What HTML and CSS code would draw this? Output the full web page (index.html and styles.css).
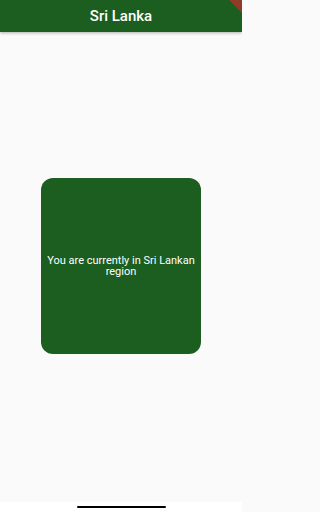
FILE: index.html
```html
<!DOCTYPE html>
<html>
<head>
<meta charset="utf-8">
<link rel="stylesheet" href="styles.css">
</head>
<body>
<div class="screen">
  <header class="appbar">
    <h1 class="title">Sri Lanka</h1>
    <div class="debug-banner"></div>
  </header>
  <main class="content">
    <div class="card">
      <p class="card-text">You are currently in Sri Lankan region</p>
    </div>
  </main>
  <footer class="navbar">
    <div class="handle"></div>
  </footer>
</div>
</body>
</html>
```
FILE: styles.css
```css
html, body {
  margin: 0;
  padding: 0;
}
body {
  width: 242px;
  height: 512px;
  overflow: hidden;
  font-family: Roboto, "Liberation Sans", sans-serif;
  background: #fafafa;
}
.screen {
  display: flex;
  flex-direction: column;
  height: 512px;
}
.appbar {
  position: relative;
  height: 32px;
  flex: 0 0 32px;
  background: #1b5e20;
  display: flex;
  align-items: center;
  justify-content: center;
  box-shadow: 0 1px 3px rgba(0,0,0,0.3);
  overflow: hidden;
  z-index: 1;
}
.title {
  margin: 0;
  color: #fff;
  font-size: 15px;
  font-weight: 500;
}
.debug-banner {
  position: absolute;
  top: -12px;
  right: -22px;
  width: 60px;
  height: 14px;
  background: #8e3b2a;
  transform: rotate(45deg);
}
.content {
  flex: 1;
  display: flex;
  align-items: center;
  justify-content: center;
  background: #fafafa;
}
.card {
  width: 160px;
  height: 176px;
  margin-top: -2px;
  margin-left: 0;
  background: #1b5e20;
  border-radius: 12px;
  display: flex;
  align-items: center;
  justify-content: center;
}
.card-text {
  margin: 0;
  color: #fff;
  font-size: 11px;
  line-height: 11px;
  text-align: center;
}
.navbar {
  flex: 0 0 10px;
  height: 10px;
  background: #fff;
  display: flex;
  justify-content: center;
}
.handle {
  margin-top: 4px;
  width: 89px;
  height: 2px;
  background: #000;
  border-radius: 1px;
}
```
